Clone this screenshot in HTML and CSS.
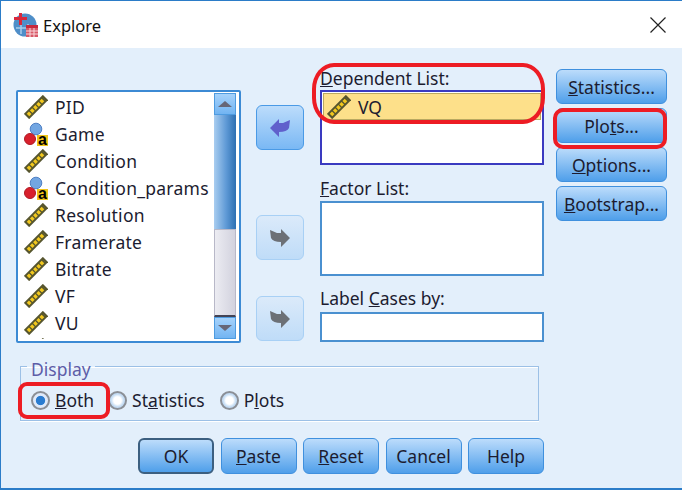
FILE: index.html
```html
<!DOCTYPE html>
<html lang="en">
<head>
    <meta charset="UTF-8">
    <meta name="viewport" content="width=device-width, initial-scale=1.0">
    <title>Explore</title>
    <link rel="stylesheet" href="styles.css">
</head>
<body>

<svg class="defs" width="0" height="0">
    <symbol id="ruler" viewBox="0 0 24 24">
        <path d="M2.500 21.500 L21.500 2.500" stroke="#56552e" stroke-width="7.500"/>
        <path d="M4 20 L20 4" stroke="#f2c81e" stroke-width="3.600" stroke-dasharray="3.200 1.300"/>
    </symbol>
    <symbol id="nominal" viewBox="0 0 24 24">
        <circle cx="12" cy="7" r="5.800" fill="#72a6e2" stroke="#4f80c4"/>
        <circle cx="6" cy="17" r="5.500" fill="#d8202c" stroke="#b01a24"/>
        <rect x="13" y="13" width="11" height="11" fill="#f0c418"/>
    </symbol>
    <symbol id="arrow" viewBox="0 0 22 20">
        <path d="M1 10 L10 1 L10 5 L14 5 L21 2 L20 10 Q18 14 10 14 L10 19 Z" fill="currentColor"/>
    </symbol>
</svg>

<div class="window">
    <div class="titlebar">
        <svg class="app-icon" width="26" height="26" viewBox="0 0 26 26">
            <circle cx="12" cy="13" r="11.500" fill="#4f8ec8"/>
            <path d="M3 16 H21 M8 10 V22 M15 12 V22" stroke="#a8cdec" stroke-width="1.500" fill="none"/>
            <path d="M6 1 H9 V5 H14 V8 H9 V13 H6 V8 H1 V5 H6 Z" fill="#d8283c"/>
            <rect x="13" y="13" width="12" height="12" fill="#d85a68"/>
            <rect x="13" y="13" width="12" height="3" fill="#c8283c"/>
            <path d="M13 19 H25 M13 22 H25 M17 16 V25 M21 16 V25" stroke="#f8d8dc" stroke-width="1"/>
        </svg>
        <span class="title-text">Explore</span>
        <svg class="close-icon" width="16" height="16" viewBox="0 0 16 16">
            <path d="M0.500 0.500 L15.500 15.500 M15.500 0.500 L0.500 15.500" stroke="#222" stroke-width="1.200"/>
        </svg>
    </div>

    <div class="dialog">
        <div class="main-row">
            <div class="var-list">
                <ul class="items">
                    <li><svg class="var-icon"><use href="#ruler"/></svg>PID</li>
                    <li><svg class="var-icon" viewBox="0 0 24 24"><use href="#nominal" width="24" height="24"/><text x="18.500" y="22.500" class="nominal-a">a</text></svg>Game</li>
                    <li><svg class="var-icon"><use href="#ruler"/></svg>Condition</li>
                    <li><svg class="var-icon" viewBox="0 0 24 24"><use href="#nominal" width="24" height="24"/><text x="18.500" y="22.500" class="nominal-a">a</text></svg>Condition_params</li>
                    <li><svg class="var-icon"><use href="#ruler"/></svg>Resolution</li>
                    <li><svg class="var-icon"><use href="#ruler"/></svg>Framerate</li>
                    <li><svg class="var-icon"><use href="#ruler"/></svg>Bitrate</li>
                    <li><svg class="var-icon"><use href="#ruler"/></svg>VF</li>
                    <li><svg class="var-icon"><use href="#ruler"/></svg>VU</li>
                    <li><svg class="var-icon"><use href="#ruler"/></svg></li>
                </ul>
                <div class="scrollbar">
                    <div class="scroll-btn"><span class="tri-up"></span></div>
                    <div class="scroll-thumb"></div>
                    <div class="scroll-track"></div>
                    <div class="scroll-btn"><span class="tri-down"></span></div>
                </div>
            </div>

            <div class="arrows">
                <button class="arrow-btn active"><svg width="22" height="20"><use href="#arrow"/></svg></button>
                <button class="arrow-btn off second"><svg class="flip" width="22" height="20"><use href="#arrow"/></svg></button>
                <button class="arrow-btn off third"><svg class="flip" width="22" height="20"><use href="#arrow"/></svg></button>
            </div>

            <div class="targets">
                <label class="target-label"><u>D</u>ependent List:</label>
                <div class="target-box dep">
                    <div class="selected"><svg class="var-icon"><use href="#ruler"/></svg>VQ</div>
                </div>
                <label class="target-label factor"><u>F</u>actor List:</label>
                <div class="target-box factor-box"></div>
                <label class="target-label cases">Label <u>C</u>ases by:</label>
                <div class="target-box cases-box"></div>
            </div>

            <div class="side-btns">
                <button class="btn"><u>S</u>tatistics...</button>
                <button class="btn">Plo<u>t</u>s...</button>
                <button class="btn"><u>O</u>ptions...</button>
                <button class="btn"><u>B</u>ootstrap...</button>
            </div>
        </div>

        <fieldset class="display">
            <legend>Display</legend>
            <span class="radio on"></span><span class="radio-label both"><u>B</u>oth</span>
            <span class="radio"></span><span class="radio-label stats">St<u>a</u>tistics</span>
            <span class="radio"></span><span class="radio-label">P<u>l</u>ots</span>
        </fieldset>

        <div class="bottom-btns">
            <button class="btn default">OK</button>
            <button class="btn"><u>P</u>aste</button>
            <button class="btn"><u>R</u>eset</button>
            <button class="btn">Cancel</button>
            <button class="btn">Help</button>
        </div>
    </div>

    <!-- red marks drawn over the dialog -->
    <div class="mark mark-dep"></div>
    <div class="mark mark-plots"></div>
    <div class="mark mark-both"></div>
</div>

</body>
</html>
```

FILE: styles.css
```css
* {
    box-sizing: border-box;
}
html, body {
    margin: 0;
    padding: 0;
}
body {
    font-family: "Noto Sans", Arial, sans-serif;
    font-size: 17.500px;
    color: #1c1c30;
}
.defs {
    position: absolute;
}
.nominal-a {
    font-family: "Liberation Sans", Arial, sans-serif;
    font-size: 16px;
    font-weight: bold;
    fill: #000;
    text-anchor: middle;
}
.window {
    position: relative;
    width: 682px;
    height: 490px;
    overflow: hidden;
    background-color: #e3effb;
    border: 1px solid #2b7cc8;
    border-width: 1px 0 2px 1px;
}
.titlebar {
    display: flex;
    align-items: center;
    height: 47px;
    padding: 0 16px 0 12px;
    background-color: white;
}
.app-icon {
    margin-right: 4px;
}
.title-text {
    flex: 1;
    margin-top: 2px;
    font-size: 16.500px;
    color: #111;
}

.dialog {
    padding-left: 15px;
}
.main-row {
    display: flex;
    height: 315px;
}

/* variable list */
.var-list {
    display: flex;
    width: 225px;
    height: 253px;
    margin-top: 42px;
    padding: 1px 3px 2px 0;
    background-color: white;
    border: 2px solid #3c8ad4;
    border-radius: 2px;
}
.items {
    flex: 1;
    margin: 0;
    padding: 0 0 0 6px;
    list-style: none;
    letter-spacing: 0.250px;
    overflow: hidden;
}
.items li {
    display: flex;
    align-items: center;
    height: 27px;
    white-space: nowrap;
}
.var-icon {
    width: 24px;
    height: 24px;
    margin-right: 7px;
    flex: none;
}
.scrollbar {
    display: flex;
    flex-direction: column;
    width: 22px;
}
.scroll-btn {
    display: flex;
    align-items: center;
    justify-content: center;
    height: 22px;
    background: linear-gradient(#a6d2fb, #72b4f2);
    border: 1px solid #4e9be0;
}
.tri-up {
    border: 7px solid transparent;
    border-top: 0;
    border-bottom: 6px solid #667;
}
.tri-down {
    border: 7px solid transparent;
    border-bottom: 0;
    border-top: 6px solid #667;
}
.scroll-thumb {
    height: 114px;
    background: linear-gradient(90deg, #a9cdf0, #5f9ad6 55%, #2d6fb2);
}
.scroll-track {
    flex: 1;
    background: linear-gradient(90deg, #ececf2, #d2d2de);
    border: 1px solid #b8b8c8;
    border-bottom: 2px solid #445;
}

/* transfer arrows */
.arrows {
    display: flex;
    flex-direction: column;
    width: 48px;
    margin-left: 15px;
    padding-top: 57px;
}
.arrow-btn {
    display: flex;
    align-items: center;
    justify-content: center;
    width: 48px;
    height: 45px;
    padding: 0;
    border-radius: 6px;
}
.arrow-btn.active {
    color: #6060cc;
    background: linear-gradient(#bcdcfb, #7ab8f4);
    border: 1px solid #4a9ae6;
}
.arrow-btn.off {
    color: #6c7076;
    background: linear-gradient(#dbeafa, #bfdcf8);
    border: 1.500px solid #a8d0f5;
}
.arrow-btn.second {
    margin-top: 65px;
}
.arrow-btn.third {
    margin-top: 36px;
}
.flip {
    transform: scaleX(-1);
}

/* target lists */
.targets {
    display: flex;
    flex-direction: column;
    width: 224px;
    margin-left: 16px;
    padding-top: 20px;
}
.target-label {
    height: 22px;
    line-height: 20px;
}
.target-label.factor {
    margin-top: 13px;
    height: 23px;
}
.target-label.cases {
    margin-top: 12px;
    height: 24px;
}
.target-box {
    flex: none;
    background-color: white;
    border: 2px solid #4a90d0;
}
.dep {
    height: 75px;
    padding: 1px;
    border-color: #3a3ac0;
}
.factor-box {
    height: 75px;
}
.cases-box {
    height: 30px;
}
.selected {
    display: flex;
    align-items: center;
    height: 27px;
    padding-left: 3px;
    background-color: #fde08a;
    border: 1px solid #b9a860;
}

/* buttons */
.btn {
    height: 35px;
    padding: 0;
    font-family: inherit;
    font-size: 17.500px;
    color: #1c1c30;
    background: linear-gradient(#bcdcfb, #4f9fea);
    border: 1.500px solid #3f90de;
    border-radius: 6px;
}
.side-btns {
    display: flex;
    flex-direction: column;
    gap: 4px;
    width: 111px;
    margin-left: 12px;
    padding-top: 21px;
}
.side-btns .btn {
    width: 111px;
}

/* display group */
.display {
    display: flex;
    align-items: flex-start;
    width: 519px;
    height: 58px;
    margin: 0 0 0 4px;
    padding: 22px 0 0 10px;
    border: 1px solid #9cc0e6;
    box-shadow: 0 1px 0 white, inset 0 1px 0 white;
}
.display legend {
    height: 6px;
    margin-left: -4px;
    padding: 0 4px;
    line-height: 12px;
    color: #5d5da8;
}
.radio {
    flex: none;
    width: 19px;
    height: 19px;
    margin-right: 5px;
    background: radial-gradient(circle, white 35%, #c4dcf4 60%);
    border: 2px solid #8b8f96;
    border-radius: 50%;
}
.radio.on {
    background: radial-gradient(circle, #2a7cd0 40%, #dfeafa 48%);
}
.radio-label {
    line-height: 19px;
}
.radio-label.both {
    margin-right: 14px;
}
.radio-label.stats {
    margin-right: 15px;
}

.bottom-btns {
    display: flex;
    gap: 6.500px;
    margin: 17px 0 0 122px;
}
.bottom-btns .btn {
    width: 76px;
    height: 36px;
}
.bottom-btns .default {
    border: 2px solid #3c5f80;
}

/* red annotations */
.mark {
    position: absolute;
    border: 4px solid #ed1c24;
}
.mark-dep {
    left: 311px;
    top: 62px;
    width: 233px;
    height: 61px;
    border-radius: 22px / 26px;
}
.mark-plots {
    left: 552px;
    top: 107px;
    width: 114px;
    height: 41px;
    border-radius: 10px;
}
.mark-both {
    left: 17px;
    top: 381px;
    width: 92px;
    height: 37px;
    border-radius: 9px;
}
```
